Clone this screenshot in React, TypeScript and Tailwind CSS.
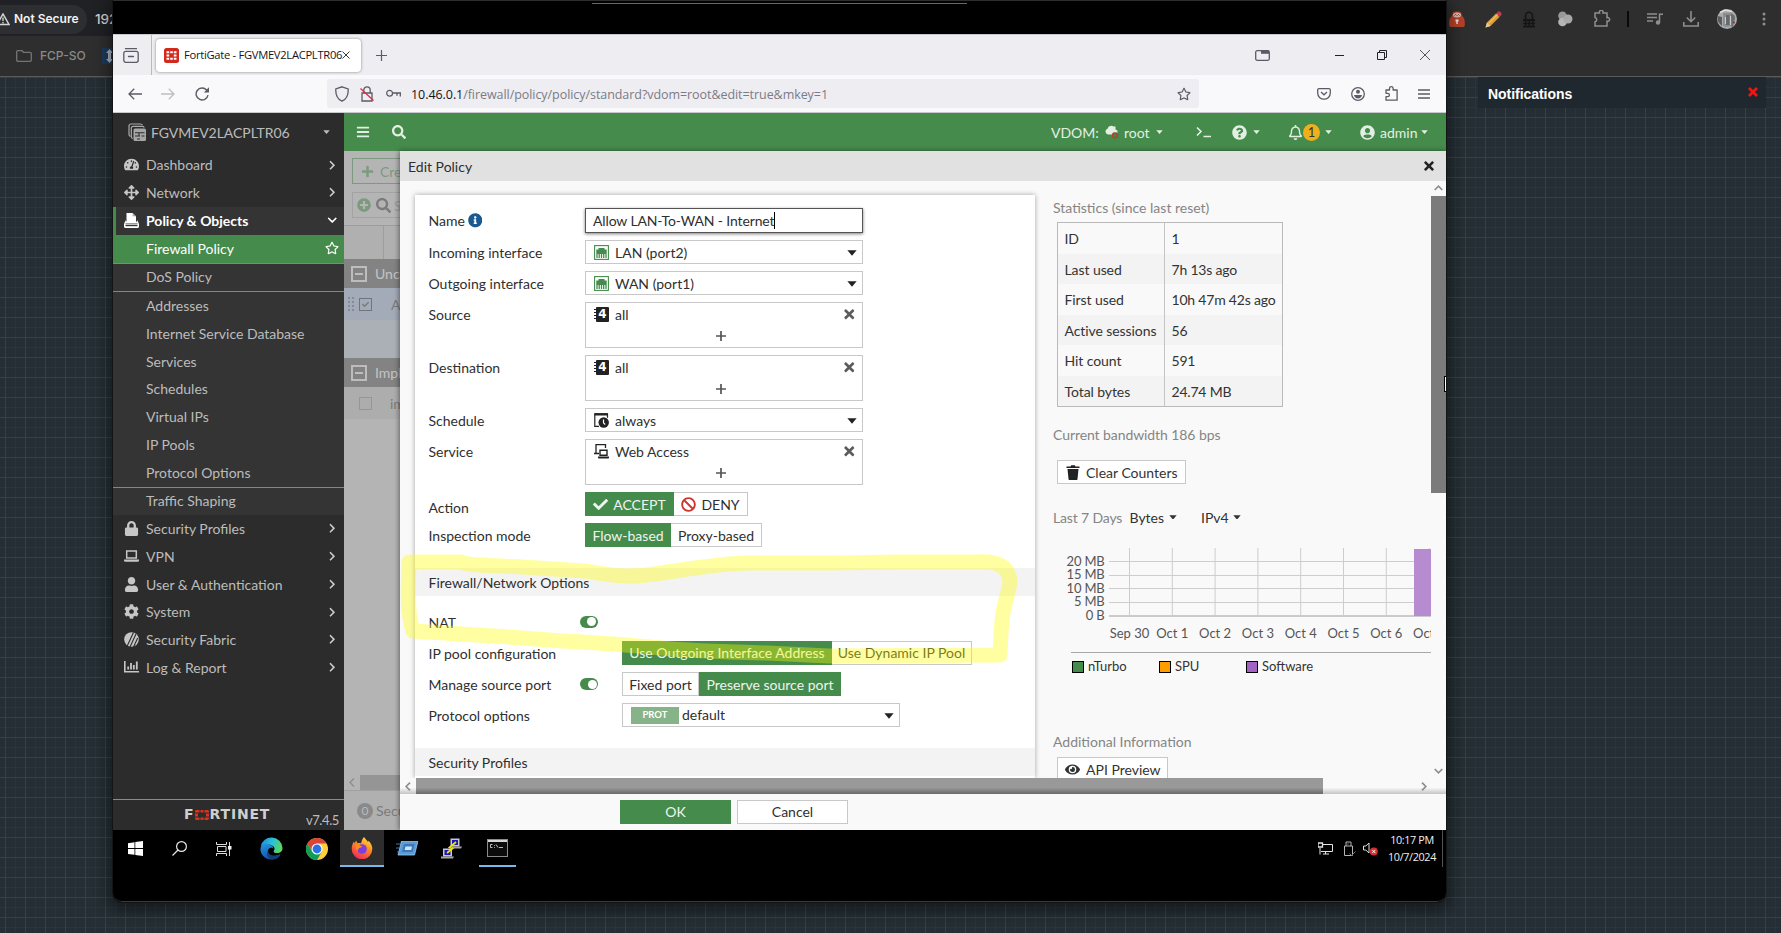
import React from "react";
import {
  FaTachometerAlt, FaArrowsAlt, FaLock, FaUser, FaCog, FaEye, FaBan, FaCheck, FaTimes, FaPlus,
  FaPlusCircle, FaSearch, FaBars, FaQuestionCircle, FaUserCircle, FaInfoCircle, FaRegBell, FaRegStar,
  FaChevronRight, FaChevronDown,
} from "react-icons/fa";

type Kids = { children?: React.ReactNode };

/* ---------- Small drawings ---------- */

function Svg({ w, h, vb, className = "", children }: { w: number; h: number; vb: string; className?: string } & Kids) {
  return (
    <svg width={w} height={h} viewBox={vb} fill="none" className={"shrink-0 " + className}>
      {children}
    </svg>
  );
}

const PolicyIcon = () => (
  <Svg w={15} h={15} vb="0 0 15 15">
    <path d="M2.500 0H8.500l3.500 3.500V8l1.500 2H1.500l1-2z" fill="#fff" />
    <path d="M8.700 0v3.300H12z" fill="#aaa" />
    <path d="M0 10.500h15v3c0 .8-.7 1.500-1.500 1.500h-12C.7 15 0 14.300 0 13.500z" fill="#fff" />
    <path d="M0 10.500 2 7v3.500zM15 10.500 13 7v3.500z" fill="#fff" />
    <path d="M1.500 11.700h12v1.500h-12z" fill="#343434" />
  </Svg>
);
const LaptopIcon = () => (
  <Svg w={15} h={12} vb="0 0 15 12">
    <path d="M2.700 1h9.600v7H2.700z" stroke="#c6c6c6" strokeWidth="1.500" />
    <path d="M0 9.600h15v.6c0 1-.7 1.600-1.600 1.600H1.600C.7 11.800 0 11.200 0 10.200z" fill="#c6c6c6" />
  </Svg>
);
const FabricIcon = () => (
  <Svg w={15} h={15} vb="0 0 15 15">
    <circle cx="7.500" cy="7.500" r="7.300" fill="#c6c6c6" />
    <path d="M3.200 14 9.500.5M6 15 12 2M9.500 15l4.200-9" stroke="#2c2c2c" strokeWidth="1.100" />
  </Svg>
);
const ReportIcon = () => (
  <Svg w={15} h={12} vb="0 0 15 12">
    <path d="M.8 0v10.800H15" stroke="#c6c6c6" strokeWidth="1.600" />
    <path d="M4.200 8.500V5.500M7 8.500V2M9.800 8.500V4M12.800 8.500V.5" stroke="#c6c6c6" strokeWidth="1.800" />
  </Svg>
);
const DeviceIcon = () => (
  <Svg w={19} h={19} vb="0 0 19 19">
    <path d="M2.500 13.500C1.300 13 1 12.500 1 11.500V3c0-1.200.8-2 2-2h9.500c1 0 1.500.3 2 1.200" stroke="#aaa" strokeWidth="1.200" />
    <path d="M4.800 15.500c-1-.3-1.500-1-1.500-2V5.300c0-1.200.8-2 2-2h9c1 0 1.700.5 2 1.200" stroke="#aaa" strokeWidth="1.200" />
    <rect x="5.500" y="5.600" width="12.500" height="12.400" rx="1.500" fill="#a6a6a6" />
    <path d="M7 9.800h9.500M7 13h5M13.500 13h3M9 16h3M11 10v3" stroke="#2c2c2c" strokeWidth="1.100" />
  </Svg>
);
const PortIcon = () => (
  <Svg w={15} h={15} vb="0 0 15 15">
    <rect x=".6" y=".6" width="13.800" height="13.800" stroke="#458b4c" strokeWidth="1.100" fill="#fff" />
    <path d="M2.300 4.500H4.500V3h6v1.500h2.200V9H2.300z" fill="#458b4c" />
    <path d="M3 9v4M5.200 9v4M7.500 9v4M9.700 9v4M12 9v4" stroke="#458b4c" strokeWidth="1.300" />
  </Svg>
);
const AddressIcon = () => (
  <div className="relative flex h-[15px] w-[15px] items-center justify-center">
    <div className="ml-[2px] flex h-[15px] w-[13px] items-center justify-center rounded-[1px] bg-[#222] font-['DejaVu_Sans',sans-serif] text-[12px] font-bold leading-none text-white">4</div>
    <div className="absolute left-0 top-[2px] h-[11px] w-[2px] bg-[repeating-linear-gradient(#222_0_1px,transparent_1px_3px)]" />
  </div>
);
const ScheduleIcon = () => (
  <Svg w={15} h={15} vb="0 0 15 15">
    <path d="M5 13.300H.8V.8h12.700v4" stroke="#222" strokeWidth="1.200" />
    <path d="M.5.3h13.300v2.200H.5z" fill="#222" />
    <circle cx="9.700" cy="9.500" r="5.200" fill="#222" />
    <path d="M9.500 6.500v3.300l1.700 1.700" stroke="#fff" strokeWidth="1.200" />
  </Svg>
);
const ServiceIcon = () => (
  <Svg w={15} h={15} vb="0 0 15 15">
    <path d="M2 9V.7h9.500V4M0 9.500h5" stroke="#222" strokeWidth="1.300" />
    <path d="M6 6.200h7v5H6z" stroke="#222" strokeWidth="1.400" />
    <path d="M4 12.500h11v1.200c0 .4-.3.800-.8.800H4.800c-.5 0-.8-.4-.8-.8z" fill="#222" />
  </Svg>
);
const Caret = ({ s = 10, className = "" }: { s?: number; className?: string }) => (
  <Svg w={s} h={s * 0.6} vb="0 0 10 6" className={className}>
    <path d="M.4.3h9.200L5 5.800z" fill="currentColor" />
  </Svg>
);

/* ---------- Browser chrome of the host ---------- */

function HostBrowser() {
  return (
    <div className="flex h-[77px] shrink-0 border-b border-[#5a5a5a] bg-[#2e2e2e]">
      <div className="flex w-[113px] flex-col overflow-hidden">
        <div className="flex h-[36px] shrink-0 items-center bg-[#202124] pt-[2px]">
          <div className="flex h-[29px] w-[87px] shrink-0 items-center rounded-r-full bg-[#2d2e31]">
            <Svg w={10} h={13} vb="0 0 10 13">
              <path d="M-3 11.500 3 1l6 10.500z" stroke="#d5d5d5" strokeWidth="1.500" />
              <path d="M3 4.500V8M3 9v1.400" stroke="#d5d5d5" strokeWidth="1.400" />
            </Svg>
            <span className="ml-[4px] whitespace-nowrap font-['Inter',sans-serif] text-[12px] font-semibold text-[#f2f2f2]">Not Secure</span>
          </div>
          <span className="ml-[8px] whitespace-nowrap font-['Inter',sans-serif] text-[13.500px] font-medium text-[#d0d0d0]">192</span>
        </div>
        <div className="flex flex-1 items-center">
          <Svg w={16} h={12} vb="0 0 16 12" className="ml-[16px]">
            <path d="M.7 2c0-.8.5-1.300 1.300-1.300h4l1.500 1.600H14c.8 0 1.300.5 1.300 1.300V10c0 .8-.5 1.300-1.300 1.300H2c-.8 0-1.300-.5-1.300-1.300z" stroke="#747474" strokeWidth="1.300" />
          </Svg>
          <span className="ml-[8px] w-[62px] shrink-0 font-['Inter',sans-serif] text-[12px] font-medium text-[#8a8a8a]">FCP-SO</span>
          <Svg w={14} h={16} vb="0 0 14 16">
            <rect width="14" height="16" fill="#1d3a5c" />
            <path d="M7.500 1 11 5H9v6h2l-3.500 4L4 11h2V5H4z" fill="#aab7c4" />
          </Svg>
        </div>
      </div>
      <div className="ml-auto flex h-[38px] items-center">
        <div className="flex w-[36px] justify-center">
          <Svg w={16} h={16} vb="0 0 16 16">
            <path d="M4 1.500C5 .3 11 .3 12 1.500l1.500 4c1.500 1 2.500 3 2.300 8.500-.1 1.500-1 2-2 2H2.200c-1 0-1.900-.5-2-2C0 8.500 1 6.500 2.500 5.500z" fill="#b5422a" />
            <ellipse cx="8" cy="4" rx="4" ry="2.500" fill="#d8b9ae" />
            <path d="M6.500 8.500h3v2H8.700V13H7.300v-2.500h-.8z" fill="#f0e6e2" />
            <path d="M5.500 4.500l1-1 1 1M8.500 4.500l1-1 1 1" stroke="#5c2416" strokeWidth=".8" />
          </Svg>
        </div>
        <div className="flex w-[36px] justify-center">
          <Svg w={17} h={17} vb="0 0 17 17">
            <path d="M.5 16.500 2 11.500 11 2.500l3.500 3.500L5.500 15z" fill="#e29a35" />
            <path d="M11 2.500 13 .7c.6-.6 1.400-.6 2 0l1.300 1.300c.6.6.6 1.400 0 2L14.500 6z" fill="#c4385a" />
            <path d="M.5 16.500 2 11.500 5.500 15z" fill="#e5c9a0" />
            <path d="M3.500 12.500l9-9" stroke="#f1c04e" strokeWidth="1.300" />
          </Svg>
        </div>
        <div className="flex w-[36px] justify-center">
          <Svg w={14} h={17} vb="0 0 14 17">
            <path d="M3.500 8V4.800a3.500 3.500 0 0 1 7 0V8" stroke="#151515" strokeWidth="1.600" />
            <rect x="1" y="8" width="12" height="8.500" fill="#151515" />
            <path d="M1 11h12M1 14h12" stroke="#3a3a3a" strokeDasharray="2 1.500" />
          </Svg>
        </div>
        <div className="flex w-[36px] justify-center">
          <Svg w={16} h={16} vb="0 0 16 16">
            <circle cx="5.500" cy="4.800" r="4.300" fill="#9a9a9a" />
            <circle cx="5.500" cy="11" r="4.300" fill="#b5b5b5" />
            <circle cx="11" cy="8" r="4.500" fill="#a8a8a8" />
          </Svg>
        </div>
        <div className="flex w-[37px] justify-center">
          <Svg w={18} h={18} vb="0 0 18 18">
            <path d="M2 3h4.500a1.900 1.900 0 1 1 3.500 0H14v4.700a1.900 1.900 0 1 1 0 3.500V16H2v-4.200a2.200 2.200 0 0 0 0-4.300z" stroke="#8e8e8e" strokeWidth="1.500" />
          </Svg>
        </div>
        <div className="mx-[7px] h-[16px] w-[2px] bg-[#0a0a0a]" />
        <div className="flex w-[38px] justify-center">
          <Svg w={16} h={12} vb="0 0 16 12">
            <path d="M0 1h10M0 4.500h10M0 8h6M12.500 9.500V1.200H16" stroke="#8e8e8e" strokeWidth="1.500" />
            <circle cx="11" cy="9.500" r="2.200" fill="#8e8e8e" />
          </Svg>
        </div>
        <div className="flex w-[33px] justify-center">
          <Svg w={16} h={16} vb="0 0 16 16">
            <path d="M8 0v10M3.800 6.500 8 10.700l4.200-4.200M.8 11v4h14.400v-4" stroke="#8e8e8e" strokeWidth="1.600" />
          </Svg>
        </div>
        <div className="flex w-[40px] justify-center">
          <Svg w={20} h={20} vb="0 0 20 20">
            <circle cx="10" cy="10" r="10" fill="#a9abad" />
            <path d="M6 4l8-.5L15 17l-6 1-3-1z" fill="#8c8e90" />
            <path d="M.8 7 5 8v9l-3-3C.5 12 .3 9 .8 7z" fill="#5a5c5e" />
            <path d="M14 4l3.500 2.500.5 3-2 8-1.500.5z" fill="#6a6c6e" />
            <path d="M9 6h3.500v10H9z" fill="#66696c" />
            <path d="M8.500 8v7M13.500 7v9" stroke="#c9cbcd" />
            <path d="M3 3.500 8 1l7 1.500" stroke="#dedede" strokeWidth="1.500" />
            <circle cx="17" cy="13.500" r="1" fill="#8e3030" />
          </Svg>
        </div>
        <div className="flex w-[34px] justify-center">
          <Svg w={4} h={14} vb="0 0 4 14">
            <circle cx="2" cy="2" r="1.500" fill="#8e8e8e" />
            <circle cx="2" cy="7" r="1.500" fill="#8e8e8e" />
            <circle cx="2" cy="12" r="1.500" fill="#8e8e8e" />
          </Svg>
        </div>
      </div>
    </div>
  );
}

/* ---------- Firefox ---------- */

function TabStrip() {
  const k = "#5b5b66";
  return (
    <div className="flex h-[41px] shrink-0 items-center border-t border-[#c9c8cc] bg-[#eeedf2] font-['Open_Sans',sans-serif]">
      <div className="flex w-[39px] justify-center border-r border-[#b9b8bd] py-[13px] pr-[2px]">
        <Svg w={16} h={15} vb="0 0 16 15">
          <path d="M2.500.7h11" stroke={k} strokeWidth="1.300" strokeLinecap="round" />
          <rect x=".8" y="3.300" width="14.400" height="11" rx="2" stroke={k} strokeWidth="1.300" />
          <path d="M5.500 8.500h5" stroke={k} strokeWidth="1.300" strokeLinecap="round" />
        </Svg>
      </div>
      <div className="ml-[4px] flex h-[33px] w-[205px] items-center rounded-[4px] bg-white pl-[8px] shadow-[0_0_3px_rgba(0,0,0,.45)]">
        <Svg w={15} h={15} vb="0 0 15 15">
          <rect width="15" height="15" rx="2.500" fill="#d3291c" />
          <path d="M2.500 3.300h2.700v2H2.500zM6.200 3.300h2.600v2H6.200zM9.800 3.300h2.700v2H9.800zM2.500 6.500h2.700v2H2.500zM9.800 6.500h2.700v2H9.800zM2.500 9.700h2.700v2H2.500zM6.200 9.700h2.600v2H6.200zM9.800 9.700h2.700v2H9.800z" fill="#fff" />
        </Svg>
        <span className="ml-[5px] w-[158px] whitespace-nowrap text-[11.200px] tracking-[-0.290px] text-[#15141a]">FortiGate - FGVMEV2LACPLTR06</span>
        <Svg w={8} h={8} vb="0 0 8 8">
          <path d="M.5.5l7 7M7.500.5l-7 7" stroke="#38383f" />
        </Svg>
      </div>
      <Svg w={11} h={11} vb="0 0 11 11" className="ml-[15px]">
        <path d="M5.500 0v11M0 5.500h11" stroke={k} strokeWidth="1.200" />
      </Svg>
      <Svg w={15} h={11} vb="0 0 15 11" className="ml-auto">
        <rect x=".7" y=".7" width="13.600" height="9.600" rx="1.500" stroke={k} strokeWidth="1.300" />
        <path d="M6 .5h8v3.300H6z" fill={k} />
      </Svg>
      <div className="ml-[65px] h-px w-[9px] bg-[#222]" />
      <Svg w={10} h={10} vb="0 0 10 10" className="ml-[33px]">
        <path d="M.5 2.500h7v7h-7zM2.500 2.500v-2h7v7h-2" stroke="#222" />
      </Svg>
      <Svg w={10} h={10} vb="0 0 10 10" className="ml-[33px] mr-[16px]">
        <path d="M0 0l10 10M10 0 0 10" stroke="#444" strokeWidth=".9" />
      </Svg>
    </div>
  );
}

function NavBar() {
  const k = "#5b5b66";
  return (
    <div className="flex h-[38px] shrink-0 items-center border-b border-[#c8c8cc] bg-[#f9f9fb] pl-[15px] font-['Open_Sans',sans-serif]">
      <Svg w={14} h={12} vb="0 0 14 12">
        <path d="M14 6H1M6.200.8 1 6l5.200 5.200" stroke={k} strokeWidth="1.300" />
      </Svg>
      <Svg w={14} h={12} vb="0 0 14 12" className="ml-[19px]">
        <path d="M0 6h13M7.800.8 13 6l-5.200 5.200" stroke="#bdbdc4" strokeWidth="1.300" />
      </Svg>
      <Svg w={15} h={14} vb="0 0 15 14" className="ml-[20px]">
        <path d="M13 8.200A6 6 0 1 1 11.600 3l1.200 1.300" stroke={k} strokeWidth="1.400" />
        <path d="M14 .3v5.200H8.800z" fill={k} />
      </Svg>
      <div className="ml-[117px] flex h-[29px] w-[872px] items-center rounded-[3px] bg-[#eeedf2] pl-[8px]">
        <Svg w={14} h={16} vb="0 0 14 16">
          <path d="M7 .8 13.200 3c.3 5.500-1.200 10-6.200 12.200C2 13 .5 8.500.8 3z" stroke={k} strokeWidth="1.300" />
        </Svg>
        <Svg w={14} h={16} vb="0 0 14 16" className="ml-[11px]">
          <path d="M3.800 7V4a3.200 3.200 0 0 1 6.400 0v3M2 7h10v8H2z" stroke={k} strokeWidth="1.300" />
          <path d="M.5 2.500l13 12" stroke="#e22850" strokeWidth="1.300" />
        </Svg>
        <Svg w={15} h={9} vb="0 0 15 9" className="ml-[12px]">
          <circle cx="3.600" cy="4.200" r="2.900" stroke={k} strokeWidth="1.300" />
          <path d="M6.500 4H15M11 4v2.800M14.300 4v3.600" stroke={k} strokeWidth="1.300" />
        </Svg>
        <span className="ml-[10px] whitespace-nowrap pt-[3px] text-[12.500px] tracking-[-0.060px] text-[#7c7b84]">
          <span className="text-[#15141a]">10.46.0.1</span>/firewall/policy/policy/standard?vdom=root&amp;edit=true&amp;mkey=1
        </span>
        <FaRegStar size={14} color={k} className="ml-auto mr-[8px]" />
      </div>
      <Svg w={14} h={12} vb="0 0 14 12" className="ml-[118px]">
        <path d="M2 .7h10c.7 0 1.300.5 1.300 1.300v3c0 3.500-2.800 6.200-6.300 6.200S.7 8.500.7 5V2C.7 1.200 1.300.7 2 .7z" stroke={k} strokeWidth="1.300" />
        <path d="M4 4l3 2.800L10 4" stroke={k} strokeWidth="1.300" />
      </Svg>
      <Svg w={14} h={14} vb="0 0 14 14" className="ml-[20px]">
        <circle cx="7" cy="7" r="6.300" stroke={k} strokeWidth="1.300" />
        <circle cx="7" cy="4.800" r="2" fill={k} />
        <path d="M3 8h8c-.3 2.300-2 3.500-4 3.500S3.300 10.300 3 8z" fill={k} />
      </Svg>
      <Svg w={13} h={15} vb="0 0 13 15" className="ml-[20px]">
        <path d="M1 14.200v-3.500h1.700a1.700 1.700 0 0 0 0-3.400H1V4h3.500V2.500a1.800 1.800 0 0 1 3.600 0V4h4v10.200z" stroke={k} strokeWidth="1.300" strokeLinejoin="round" />
      </Svg>
      <Svg w={12} h={10} vb="0 0 12 10" className="ml-[20px]">
        <path d="M0 1h12M0 5h12M0 9h12" stroke={k} strokeWidth="1.300" />
      </Svg>
    </div>
  );
}

/* ---------- FortiGate side menu ---------- */

function MenuRow({ icon, label, open }: { icon: React.ReactNode; label: string; open?: boolean }) {
  return (
    <div className={open ? "flex h-[27.750px] shrink-0 items-center border-l-[3px] border-[#458b4c] bg-[#343434] pl-[8px] font-bold text-white" : "flex h-[27.750px] shrink-0 items-center pl-[11px]"}>
      <div className="flex w-[15px] justify-center pb-px text-[#c6c6c6]">{icon}</div>
      <span className="ml-[7px] pb-px">{label}</span>
      {open ? <FaChevronDown size={10.500} className="mb-px ml-auto mr-[7px]" /> : <FaChevronRight size={10.500} className="mb-px ml-auto mr-[7px] text-[#ccc]" />}
    </div>
  );
}
const SubRow = ({ label }: { label: string }) => (
  <div className="flex h-[27.750px] items-center bg-[#343434] pb-px pl-[33px]">{label}</div>
);
const Divider = () => <div className="h-px bg-[#858585]" />;

function SideMenu() {
  return (
    <div className="flex w-[231px] shrink-0 flex-col bg-[#2c2c2c] text-[14px] text-[#bcbcbc]">
      <div className="flex h-[38.500px] shrink-0 items-center pl-[15px] text-[14px] tracking-[-0.050px]">
        <DeviceIcon />
        <span className="ml-[4px] pt-px">FGVMEV2LACPLTR06</span>
        <Caret s={7} className="ml-auto mr-[14px]" />
      </div>
      <MenuRow icon={<FaTachometerAlt size={15} />} label="Dashboard" />
      <MenuRow icon={<FaArrowsAlt size={15} />} label="Network" />
      <MenuRow icon={<PolicyIcon />} label="Policy & Objects" open />
      <div className="flex h-[27.750px] items-center bg-[#458b4c] pb-px pl-[33px] text-white">
        Firewall Policy
        <FaRegStar size={14} className="ml-auto mr-[5px]" />
      </div>
      <Divider />
      <SubRow label="DoS Policy" />
      <Divider />
      <SubRow label="Addresses" />
      <SubRow label="Internet Service Database" />
      <SubRow label="Services" />
      <SubRow label="Schedules" />
      <SubRow label="Virtual IPs" />
      <SubRow label="IP Pools" />
      <SubRow label="Protocol Options" />
      <Divider />
      <SubRow label="Traffic Shaping" />
      <MenuRow icon={<FaLock size={15} />} label="Security Profiles" />
      <MenuRow icon={<LaptopIcon />} label="VPN" />
      <MenuRow icon={<FaUser size={15} />} label="User & Authentication" />
      <MenuRow icon={<FaCog size={15} />} label="System" />
      <MenuRow icon={<FabricIcon />} label="Security Fabric" />
      <MenuRow icon={<ReportIcon />} label="Log & Report" />
      <div className="mt-auto flex h-[31px] shrink-0 border-t border-[#8a8a8a] pl-[71px]">
        <div className="flex h-[29px] w-[117px] items-center font-['DejaVu_Sans',sans-serif] text-[14px] font-bold text-[#cfcfcf]">
          <span>F</span>
          <Svg w={14} h={10} vb="0 0 14 10" className="ml-[1px]">
            <path d="M1 0h3.500v2.500H0V1zM5.500 0h3v2.500h-3zM9.500 0H13l1 1v1.500H9.500zM0 3.500h3v3H0zM11 3.500h3v3h-3zM0 7.500h4.500V10H1L0 9zM5.500 7.500h3V10h-3zM9.500 7.500H14V9l-1 1H9.500z" fill="#d6341f" />
          </Svg>
          <span className="ml-px tracking-[0.800px]">RTINET</span>
        </div>
        <span className="ml-auto mr-[5px] mt-[11px] text-[13px] leading-[19px] tracking-[-0.400px]">v7.4.5</span>
      </div>
    </div>
  );
}

/* ---------- Green header ---------- */

function TopBar() {
  return (
    <div className="flex h-[38px] shrink-0 items-center bg-[#458b4c] pl-[12px] text-[14px] text-[#e4efe4]">
      <FaBars size={14} />
      <FaSearch size={14} className="ml-[22px]" />
      <span className="ml-auto w-[54px] pt-px">VDOM:</span>
      <div className="w-[19px]">
        <Svg w={14} h={14} vb="0 0 14 14">
          <path d="M3 9.500a3 3 0 0 1-.5-5.800A4 4 0 0 1 8.500 1.500h2v3l2 1V7.500L8 7.500 7 9.500z" fill="#e4efe4" />
          <circle cx="10" cy="10.500" r="2.300" stroke="#c0392b" strokeWidth="1.500" />
        </Svg>
      </div>
      <span className="w-[32px] pt-px">root</span>
      <Caret s={7} />
      <Svg w={15} h={12} vb="0 0 15 12" className="ml-[33px]">
        <path d="M1 1.500 5 5.500 1 9.500M7.500 10.500H15" stroke="#e4efe4" strokeWidth="1.600" />
      </Svg>
      <FaQuestionCircle size={15} className="ml-[21px]" />
      <Caret s={7} className="ml-[6px]" />
      <FaRegBell size={15} className="ml-[28px]" />
      <div className="flex h-[17px] w-[17px] items-center justify-center rounded-full bg-[#efb01f] text-[13px] leading-none text-[#333]">1</div>
      <Caret s={7} className="ml-[5px]" />
      <FaUserCircle size={15} className="ml-[28px]" />
      <span className="ml-[5px] w-[41px] pt-px">admin</span>
      <Caret s={7} className="mr-[18px]" />
    </div>
  );
}

/* ---------- Dimmed policy list ---------- */

function PolicyList() {
  const group = (t: string) => (
    <div className="flex h-[29px] shrink-0 items-center bg-[#838383] pl-[7px] text-[#c4c4c4]">
      <div className="flex h-[16px] w-[16px] shrink-0 items-center justify-center border-2 border-[#bdbdbd]">
        <div className="h-[2px] w-[8px] bg-[#bdbdbd]" />
      </div>
      <span className="ml-[8px]">{t}</span>
    </div>
  );
  return (
    <div className="flex w-[56px] shrink-0 flex-col overflow-hidden whitespace-nowrap bg-[#b4b4b4] text-[14px] text-[#7b7b7b]">
      <div className="ml-[8px] mt-[7px] flex h-[26px] w-[100px] shrink-0 items-center border border-[#7c9a7f] pl-[8px] text-[#7c9a7f]">
        <FaPlus size={13} className="shrink-0" />
        <span className="ml-[6px]">Create</span>
      </div>
      <div className="ml-[8px] mt-[8px] flex h-[26px] w-[100px] shrink-0 items-center border border-[#a3a3a3] pl-[4px]">
        <FaPlusCircle size={14} color="#7c9a7f" className="shrink-0" />
        <FaSearch size={15} className="ml-[5px] shrink-0" />
        <span className="ml-[3px] text-[#999]">Search</span>
      </div>
      <div className="mt-[7px] flex h-[34px] shrink-0 border-t border-[#9d9d9d] bg-[#b0b0b0]">
        <div className="w-[40px] border-r border-[#9d9d9d]" />
      </div>
      {group("Uncategorized")}
      <div className="flex h-[32px] shrink-0 items-center bg-[#a3abb8] pl-[4px]">
        <div className="grid shrink-0 grid-cols-2 gap-[2px]">
          {Array.from({ length: 8 }, (_, i) => <div key={i} className="h-[2px] w-[2px] bg-[#858b94]" />)}
        </div>
        <div className="ml-[5px] flex h-[13px] w-[13px] shrink-0 items-center justify-center border-[1.500px] border-[#70757d]"><FaCheck size={7} /></div>
        <span className="ml-[19px]">Allow</span>
      </div>
      <div className="h-[38px] shrink-0 bg-[#aab0b6]" />
      {group("Implicit")}
      <div className="flex h-[32px] shrink-0 items-center bg-[#adadad] pl-[15px]">
        <div className="h-[13px] w-[13px] shrink-0 border border-[#969696]" />
        <span className="ml-[18px]">implicit</span>
      </div>
      <div className="mt-auto flex h-[15px] shrink-0 items-center">
        <Svg w={6} h={9} vb="0 0 6 9" className="ml-[5px]">
          <path d="M5 .5 1 4.500l4 4" stroke="#8c8c8c" strokeWidth="1.300" />
        </Svg>
        <div className="ml-[5px] h-[15px] w-[60px] shrink-0 bg-[#959595]" />
      </div>
      <div className="flex h-[40px] shrink-0 items-center border-t border-[#a0a0a0] bg-[#b0b0b0] pl-[13px]">
        <div className="flex h-[16px] w-[16px] shrink-0 items-center justify-center rounded-full bg-[#8a8a8a] text-[12px] leading-none text-[#bbb]">0</div>
        <span className="ml-[3px]">Security</span>
      </div>
    </div>
  );
}

/* ---------- Policy form ---------- */

function Row({ label, h, pad = "pb-px", children }: { label: React.ReactNode; h: string; pad?: string } & Kids) {
  return (
    <div className={"flex shrink-0 pl-[13.500px] " + h}>
      <div className={"mr-[0.500px] flex h-[26px] w-[156px] shrink-0 items-center " + pad}>{label}</div>
      {children}
    </div>
  );
}
function SelectBox({ icon, text }: { icon: React.ReactNode; text: string }) {
  return (
    <div className="flex h-[24px] w-[278px] items-center border border-[#c8c8c8] bg-white pl-[8px]">
      {icon}
      <span className="ml-[6px]">{text}</span>
      <Caret s={10} className="ml-auto mr-[5px] mt-[2px] text-[#222]" />
    </div>
  );
}
function MultiBox({ icon, text }: { icon: React.ReactNode; text: string }) {
  return (
    <div className="flex h-[46px] w-[278px] flex-col border border-[#c8c8c8] bg-white">
      <div className="flex h-[22px] items-center pl-[8px]">
        {icon}
        <span className="ml-[6px]">{text}</span>
        <FaTimes size={14.500} color="#5c5c5c" className="ml-auto mr-[6px]" />
      </div>
      <div className="flex flex-1 justify-center pr-[6px] pt-[6px]">
        <Svg w={10} h={10} vb="0 0 10 10"><path d="M5 0v10M0 5h10" stroke="#555" strokeWidth="1.700" /></Svg>
      </div>
    </div>
  );
}
const Toggle = () => (
  <div className="flex h-[12px] w-[18px] items-center justify-end rounded-full bg-[#458b4c] pr-[1.500px]">
    <div className="h-[9px] w-[9px] rounded-full bg-white" />
  </div>
);
const SectionHead = ({ label }: { label: string }) => (
  <div className="flex h-[28px] shrink-0 items-center bg-[#f3f3f3] pl-[13.500px]">{label}</div>
);
const on = "flex h-[24px] items-center justify-center bg-[#458b4c] text-[#eef5ee] ";
const off = "flex h-[24px] items-center justify-center border border-[#c8c8c8] bg-white ";

function PolicyForm() {
  return (
    <div className="flex h-full flex-col pt-[13px] text-[14px]">
      <Row label={<>Name <FaInfoCircle size={14.500} color="#1b5a90" className="ml-[3px]" /></>} h="h-[32px]">
        <div className="flex h-[25px] w-[278px] items-center border border-[#555] bg-white pl-[7px] tracking-[-0.130px] shadow-[0_1px_3px_rgba(0,0,0,.5)]">
          Allow LAN-To-WAN - Internet
          <div className="h-[17px] w-px bg-black" />
        </div>
      </Row>
      <Row label="Incoming interface" h="h-[31px]"><SelectBox icon={<PortIcon />} text="LAN (port2)" /></Row>
      <Row label="Outgoing interface" h="h-[31px]"><SelectBox icon={<PortIcon />} text="WAN (port1)" /></Row>
      <Row label="Source" h="h-[53px]"><MultiBox icon={<AddressIcon />} text="all" /></Row>
      <Row label="Destination" h="h-[53px]"><MultiBox icon={<AddressIcon />} text="all" /></Row>
      <Row label="Schedule" h="h-[31px]"><SelectBox icon={<ScheduleIcon />} text="always" /></Row>
      <Row label="Service" h="h-[53px]"><MultiBox icon={<ServiceIcon />} text="Web Access" /></Row>
      <Row label="Action" h="h-[31px]" pad="pt-[5px]">
        <div className={on + "w-[89px]"}><FaCheck size={15} className="mr-[5px]" />ACCEPT</div>
        <div className={off + "w-[74px] border-l-0"}><FaBan size={15} color="#d0342c" className="mr-[5px]" />DENY</div>
      </Row>
      <Row label="Inspection mode" h="h-[45px]">
        <div className={on + "w-[86px]"}>Flow-based</div>
        <div className={off + "w-[91px] border-l-0"}>Proxy-based</div>
      </Row>
      <SectionHead label="Firewall/Network Options" />
      <div className="flex h-[45px] shrink-0 items-center pl-[13.500px] pt-[7px]">
        <span className="w-[151px]">NAT</span>
        <div className="pb-px"><Toggle /></div>
      </div>
      <Row label="IP pool configuration" h="h-[31px]">
        <div className={on + "ml-[37px] w-[210px] pb-px"}>Use Outgoing Interface Address</div>
        <div className={off + "w-[140px] border-l-0 pb-px"}>Use Dynamic IP Pool</div>
      </Row>
      <Row label="Manage source port" h="h-[31px]">
        <div className="-ml-[5px] mr-[24px] flex h-[24px] items-center"><Toggle /></div>
        <div className={off + "w-[77px]"}>Fixed port</div>
        <div className={on + "w-[142px]"}>Preserve source port</div>
      </Row>
      <Row label="Protocol options" h="h-[45px]">
        <div className="ml-[37px] flex h-[24px] w-[278px] items-center border border-[#c8c8c8] bg-white pl-[8px]">
          <div className="flex h-[17px] w-[48px] items-center justify-center bg-[#87b388] pt-px text-[9.500px] font-bold text-white">PROT</div>
          <span className="ml-[3px] pb-px">default</span>
          <Caret s={10} className="ml-auto mr-[5px] mt-px text-[#222]" />
        </div>
      </Row>
      <SectionHead label="Security Profiles" />
    </div>
  );
}

/* ---------- Statistics column ---------- */

const stats = [
  ["ID", "1"], ["Last used", "7h 13s ago"], ["First used", "10h 47m 42s ago"],
  ["Active sessions", "56"], ["Hit count", "591"], ["Total bytes", "24.74 MB"],
];
const days = ["Sep 30", "Oct 1", "Oct 2", "Oct 3", "Oct 4", "Oct 5", "Oct 6", "Oct 7"];

function Chart() {
  return (
    <svg width="378" height="106" viewBox="0 0 378 106" className="block shrink-0 overflow-hidden" fontFamily="Lato, sans-serif" fontSize="13" fill="#555">
      {[20.500, 34.500, 47.500, 61.500].map((y) => <line key={y} x1="56" x2="378" y1={y} y2={y} stroke="#cdcdcd" />)}
      {days.map((d, i) => <line key={d} x1={76.500 + i * 42.800} x2={76.500 + i * 42.800} y1="7" y2="74" stroke="#cdcdcd" />)}
      <rect x="361" y="8" width="17" height="67" fill="#b68bd0" />
      <line x1="56" x2="378" y1="75" y2="75" stroke="#9e9e9e" />
      {["20 MB", "15 MB", "10 MB", "5 MB", "0 B"].map((t, i) => (
        <text key={t} x="51.500" y={24.500 + i * 13.600} textAnchor="end" letterSpacing="-0.2">{t}</text>
      ))}
      {days.map((d, i) => <text key={d} x={76.500 + i * 42.800} y="97" textAnchor="middle">{d}</text>)}
    </svg>
  );
}

function Statistics() {
  return (
    <div className="flex h-full w-[378px] shrink-0 flex-col overflow-hidden text-[14px] text-[#333]">
      <div className="mt-[17px] h-[20px] shrink-0 leading-[20px] text-[#858585]">Statistics (since last reset)</div>
      <div className="ml-[4px] mt-[4px] w-[226px] shrink-0 border border-[#bababa]">
        {stats.map(([a, b], i) => (
          <div key={a} className={i % 2 ? "flex h-[30.500px] bg-[#f3f3f3]" : "flex h-[30.500px]"}>
            <div className="flex w-[107px] items-center border-r border-[#c4c4c4] pl-[6.500px] pt-px tracking-[-0.080px]">{a}</div>
            <div className="flex items-center pl-[6.500px] pt-px tracking-[-0.200px]">{b}</div>
          </div>
        ))}
      </div>
      <div className="mt-[18px] h-[20px] shrink-0 leading-[19px] tracking-[-0.080px] text-[#858585]">Current bandwidth 186 bps</div>
      <div className="ml-[4px] mt-[15px] flex h-[24px] w-[129px] shrink-0 items-center border border-[#c8c8c8] bg-white pl-[8px]">
        <Svg w={14} h={15} vb="0 0 14 15">
          <path d="M.5 1.500h4L5.200.300h3.600l.7 1.200h4V3H.5zM1.500 4h11l-1 10c0 .6-.5 1-1 1h-7c-.5 0-1-.4-1-1z" fill="#222" />
        </Svg>
        <span className="ml-[6px]">Clear Counters</span>
      </div>
      <div className="mt-[23px] flex h-[20px] shrink-0 items-center">
        <span className="w-[76.500px] tracking-[-0.150px] text-[#858585]">Last 7 Days</span>
        <span className="w-[39px]">Bytes</span>
        <Caret s={8} />
        <span className="ml-[24.500px] w-[32px]">IPv4</span>
        <Caret s={8} />
      </div>
      <div className="mt-[14px]"><Chart /></div>
      <div className="ml-[18px] mt-[5px] h-px shrink-0 bg-[#a8a8a8]" />
      <div className="ml-[19px] mt-[4px] flex h-[20px] shrink-0 items-center text-[13px]">
        <div className="mr-[4px] h-[12px] w-[12px] border border-black bg-[#458b4c]" /><span className="w-[71px]">nTurbo</span>
        <div className="mr-[4px] h-[12px] w-[12px] border border-black bg-[#ff9c00]" /><span className="w-[71px]">SPU</span>
        <div className="mr-[4px] h-[12px] w-[12px] border border-black bg-[#a363c3]" /><span>Software</span>
      </div>
      <div className="mt-[55px] h-[20px] shrink-0 leading-[20px] text-[#858585]">Additional Information</div>
      <div className="ml-[4px] mt-[5px] flex h-[25px] w-[111px] shrink-0 items-center border border-[#c8c8c8] bg-white pl-[7px]">
        <FaEye size={15} />
        <span className="ml-[6px]">API Preview</span>
      </div>
    </div>
  );
}

function EditPanel() {
  return (
    <div className="relative flex min-w-0 flex-1 flex-col bg-[#f9f9f9] text-[#2f2f2f] shadow-[-1px_0_5px_rgba(0,0,0,.45)]">
      <div className="flex h-[30px] shrink-0 items-center bg-[#e1e1e1] pl-[8px] text-[14px]">
        Edit Policy
        <FaTimes size={14} className="ml-auto mr-[10.500px]" color="#222" />
      </div>
      <div className="flex h-[597px] shrink-0">
        <div className="flex min-w-0 flex-1 overflow-hidden pl-[15px]">
          <div className="mt-[14px] w-[620px] shrink-0 bg-white shadow-[0_0_5px_rgba(0,0,0,.35)]">
            <PolicyForm />
          </div>
          <div className="w-[18px] shrink-0" />
          <Statistics />
        </div>
        <div className="flex w-[15px] shrink-0 flex-col items-center">
          <Svg w={9} h={6} vb="0 0 9 6" className="mb-[5px] mt-[4px]"><path d="M.7 5 4.500 1.200 8.300 5" stroke="#8e8e8e" strokeWidth="1.700" /></Svg>
          <div className="h-[297px] w-full bg-[#7b7b7b]" />
          <Svg w={9} h={6} vb="0 0 9 6" className="mb-[4px] mt-auto"><path d="M.7 1 4.500 4.800 8.300 1" stroke="#8e8e8e" strokeWidth="1.700" /></Svg>
        </div>
      </div>
      <div className="flex h-[16px] shrink-0 items-center bg-[linear-gradient(transparent_60%,#c4c4c4)]">
        <Svg w={6} h={9} vb="0 0 6 9" className="ml-[5px]"><path d="M5 .7 1.200 4.500 5 8.300" stroke="#8e8e8e" strokeWidth="1.700" /></Svg>
        <div className="ml-[5px] h-full w-[907px] bg-[linear-gradient(#999_60%,#6a6a6a)]" />
        <Svg w={6} h={9} vb="0 0 6 9" className="ml-auto mr-[19px]"><path d="M1 .7 4.800 4.500 1 8.300" stroke="#8e8e8e" strokeWidth="1.700" /></Svg>
      </div>
      <div className="flex flex-1 items-center pb-px pl-[220px] text-[14px]">
        <div className={on + "w-[111px]"}>OK</div>
        <div className="ml-[6px] flex h-[24px] w-[111px] items-center justify-center border border-[#c8c8c8] bg-white">Cancel</div>
      </div>
    </div>
  );
}

/* ---------- Windows taskbar ---------- */

function Taskbar() {
  return (
    <div className="flex h-[37px] shrink-0 items-center bg-black font-['Open_Sans',sans-serif]">
      <div className="flex w-[44px] justify-center">
        <Svg w={15} h={15} vb="0 0 15 15"><path d="M0 2.200 6.500 1.200V7H0zM7.300 1.100 15 0v7H7.300zM0 7.900h6.500v5.900L0 12.900zM7.300 7.900H15V15l-7.700-1.100z" fill="#fff" /></Svg>
      </div>
      <div className="flex w-[45px] justify-center">
        <Svg w={15} h={15} vb="0 0 15 15"><circle cx="9.500" cy="5.500" r="4.900" stroke="#e5e5e5" strokeWidth="1.200" /><path d="M6 9 .5 14.500" stroke="#e5e5e5" strokeWidth="1.300" /></Svg>
      </div>
      <div className="flex w-[44px] justify-center">
        <Svg w={16} h={14} vb="0 0 16 14">
          <path d="M.5 0v2.500h10V0M.5 14v-2.500h10V14M1.500 4.500h8.500v5H1.500zM13.500 0v14" stroke="#ddd" />
          <rect x="12" y="4" width="3.500" height="3.500" fill="#eee" />
        </Svg>
      </div>
      <div className="flex w-[50px] justify-center">
        <Svg w={23} h={23} vb="0 0 24 24">
          <defs>
            <linearGradient id="eg" x1="0" y1=".3" x2="1" y2=".6"><stop stopColor="#1b8fdc" /><stop offset=".5" stopColor="#2cc3d5" /><stop offset="1" stopColor="#5fd94a" /></linearGradient>
            <linearGradient id="eb" x1="0" y1="0" x2=".4" y2="1"><stop stopColor="#2397e0" /><stop offset="1" stopColor="#1650a8" /></linearGradient>
          </defs>
          <path d="M.7 10A11.500 11.500 0 0 1 23.500 11.500c0 3.300-2.300 5.300-5.300 5.300-3 0-4.700-1.200-3.700-2.500 1.500-2 .5-5.500-4-6.300C6.500 7.300 2.500 7.800.7 10z" fill="url(#eg)" />
          <path d="M.5 12C1 7.500 6.500 6 10.500 7.800c2.500 1.100 3.600 3 3.400 4.700-1-2-5-2-5.500 1.500-.5 4.500 5 7 11.500 4.500 1-.4 1.500.2 1 .9C18.500 22.500 15.500 23.700 12 23.600 5.500 23.500 0 18.500.5 12z" fill="url(#eb)" />
          <path d="M8.400 14c-.5 4.500 5 7 11.500 4.500 1-.4 1.500.2 1 .9-1.900 2.800-4.900 4.100-8.400 4.200-4.500-1-6.500-6-4.100-9.600z" fill="#123f7c" />
        </Svg>
      </div>
      <div className="flex w-[41px] justify-center">
        <Svg w={22} h={22} vb="0 0 22 22">
          <circle cx="11" cy="11" r="11" fill="#ffcd40" />
          <path d="M11 5.500H20.530A11 11 0 0 0 1.470 5.500L6.200 13.700z" fill="#db4437" />
          <path d="M1.470 5.500A11 11 0 0 0 11 22l4.800-8.300L11 14 6.200 13.700z" fill="#0f9d58" />
          <circle cx="11" cy="11" r="5.500" fill="#fff" />
          <circle cx="11" cy="11" r="4.400" fill="#2b72ea" />
        </Svg>
      </div>
      <div className="ml-[3px] flex h-[37px] w-[44px] items-center justify-center border-b-2 border-[#76b9ed] bg-[#2d2d2d]">
        <Svg w={22} h={22} vb="0 0 22 22">
          <defs>
            <linearGradient id="ff" x1=".8" y1="0" x2=".3" y2="1"><stop stopColor="#ffe14a" /><stop offset=".45" stopColor="#ff8a1e" /><stop offset="1" stopColor="#f0265f" /></linearGradient>
          </defs>
          <path d="M13 0c1 2 3 3 4 5l.5-1.300C20 6 21.500 9 21.300 12A10.300 10.300 0 0 1 .7 12c0-3 .8-5.500 2.300-7.500l.6 2L5 3.500l1.500 2.700C8 6 9 6 10 6.500 10.500 4 11.500 1.500 13 0z" fill="url(#ff)" />
          <circle cx="11" cy="12" r="4.800" fill="#7b3fe0" />
          <path d="M5 8.500c2-1 4-.5 6.500 1.200L8.500 11c-1.300.5-1.700 1.500-1.500 3-2-1.500-2.700-3.500-2-5.500z" fill="#ff8a1e" />
        </Svg>
      </div>
      <div className="flex w-[45px] justify-center">
        <Svg w={22} h={15} vb="0 0 22 15">
          <path d="M5.500 0H22l-3.500 14H2z" fill="#5b9bd8" stroke="#9cc8ee" strokeWidth=".8" />
          <path d="M8 3h10.500l-2 8H6z" fill="#3a78b8" />
          <path d="M9.500 5.500h6.500l-.8 3.500H8.700z" fill="#cfe4f7" />
          <path d="M0 3h4M0 7h3M1 11h1.500" stroke="#3a78b8" />
        </Svg>
      </div>
      <div className="flex w-[45px] justify-center">
        <Svg w={21} h={21} vb="0 0 21 21">
          <path d="M9.500.5h9v8h-9zM2 10.500h9v8H2z" fill="#c9c9c9" />
          <path d="M11 2h6v5h-6zM3.500 12h6v5h-6z" fill="#1616c8" />
          <path d="M11 8.500h10l-1 2h-9zM0 18.500h13l-1 2H0z" fill="#a5a5a5" />
          <path d="M15 4 8.500 9.500l3 1L6 15" stroke="#f2e200" strokeWidth="1.700" />
        </Svg>
      </div>
      <div className="ml-[5px] flex h-[37px] w-[37px] items-center justify-center border-b-2 border-[#76b9ed]">
        <Svg w={21} h={18} vb="0 0 21 18">
          <rect x=".5" y=".5" width="20" height="17" fill="#0b0b0b" stroke="#8b8b8b" />
          <path d="M1 2h19" stroke="#d5d5d5" strokeWidth="2" />
          <path d="M5.500 5.500H3.500v3h2M7.500 6v.8M7.500 8v.8M9 5.500l2 3M12 8.500h4" stroke="#ccc" strokeWidth=".9" />
        </Svg>
      </div>
      <Svg w={15} h={13} vb="0 0 15 13" className="ml-auto">
        <path d="M4 2.500h10.500v7H3M7.500 9.500V12M5 12h6M2 6v6.500" stroke="#e5e5e5" />
        <path d="M0 1h4.500v4H0z" stroke="#e5e5e5" strokeWidth="1.300" />
      </Svg>
      <Svg w={13} h={16} vb="0 0 13 16" className="ml-[10px]">
        <path d="M3 5V1h5v4M1.500 5h8v9.500h-8zM5 2.500v1" stroke="#b5b5b5" />
        <path d="M6.500 12.500l2 2 4-4" stroke="#777" />
      </Svg>
      <Svg w={15} h={14} vb="0 0 15 14" className="ml-[7px]">
        <path d="M.5 4h2.300L6 1v10L2.800 8H.5z" stroke="#ddd" />
        <circle cx="10.800" cy="9.500" r="4" fill="#dc2b2b" />
        <path d="M9.200 7.900l3.200 3.200M12.400 7.900l-3.200 3.200" stroke="#fff" />
      </Svg>
      <div className="ml-[7px] flex w-[54px] flex-col items-center whitespace-nowrap text-[10.800px] leading-[16.500px] tracking-[-0.360px] text-[#f0f0f0]">
        <span>10:17 PM</span>
        <span>10/7/2024</span>
      </div>
      <div className="ml-[3px] mr-[3px] h-full w-px bg-[#555]" />
    </div>
  );
}

/* ---------- Page ---------- */

export default function App() {
  return (
    <div className="relative flex h-[933px] w-[1781px] flex-col overflow-hidden bg-[#242e34] font-['Lato',sans-serif]">
      <HostBrowser />
      <div className="flex flex-1 items-start justify-end bg-[linear-gradient(#364147_1px,transparent_1px),linear-gradient(90deg,#364147_1px,transparent_1px),linear-gradient(#2a343a_1px,transparent_1px),linear-gradient(90deg,#2a343a_1px,transparent_1px)] bg-[length:20px_20px,20px_20px,10px_10px,10px_10px] bg-[position:5px_0px] pr-[15px]">
        <div className="flex h-[31px] w-[288px] items-center bg-[#1f282e] pl-[10px] font-['Liberation_Sans',sans-serif] text-[14px] font-bold tracking-[-0.050px] text-white">
          <span className="pt-[3px]">Notifications</span>
          <Svg w={10} h={10} vb="0 0 10 10" className="mb-px ml-auto mr-[8px]"><path d="M1 1l8 8M9 1 1 9" stroke="#f51414" strokeWidth="2.800" /></Svg>
        </div>
      </div>

      {/* remote console window */}
      <div className="absolute left-[113px] top-0 flex h-[902px] w-[1333px] flex-col overflow-hidden rounded-b-[9px] bg-black shadow-[0_0_0_1px_#141414,0_4px_16px_4px_rgba(0,0,0,.45)]">
        <div className="flex h-[34px] shrink-0 flex-col border-t border-[#2d2d2d]">
          <div className="ml-[479px] mt-px h-[2px] w-[375px] border-b border-[#666]" />
        </div>
        <TabStrip />
        <NavBar />
        <div className="flex h-[717px] shrink-0">
          <SideMenu />
          <div className="flex min-w-0 flex-1 flex-col">
            <TopBar />
            <div className="flex min-h-0 flex-1">
              <PolicyList />
              <EditPanel />
            </div>
          </div>
        </div>
        <Taskbar />
        <div className="absolute left-[1331px] top-[376px] h-[16px] w-[3px] border border-r-0 border-black bg-white" />
        <div className="absolute inset-0 rounded-b-[9px] border-b border-[#3a3a3a]" />
      </div>

      {/* highlighter stroke */}
      <svg width="640" height="120" viewBox="400 550 640 120" className="absolute left-[400px] top-[550px]" fill="none">
        <path
          d="M409 562 L461 562 C465 565 480 565 522 567 L584 571 C600 573 612 576 626 576 C640 576 650 575 661 573 C690 569 715 564 747 563 L830 563 L900 562 L975 562 C1000 560 1010 568 1010 583 C1008 592 1006 600 1004 608 C1001 620 1001 635 1000 655 L829 656 L767 653 C730 652 690 651 661 648 C630 645 600 643 563 641 L502 636.500 L413 631 C407 612 408 590 409 562"
          stroke="#ffff00" strokeOpacity=".37" strokeWidth="15" strokeLinejoin="round" strokeLinecap="round"
        />
      </svg>
    </div>
  );
}
